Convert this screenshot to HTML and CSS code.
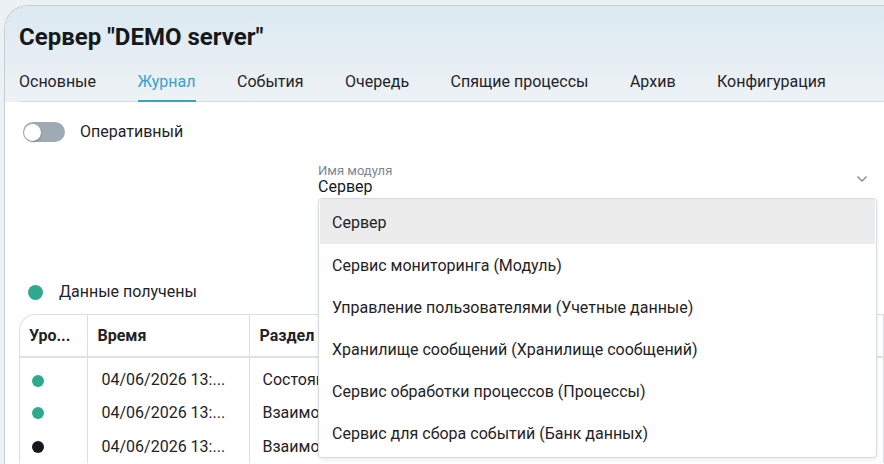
FILE: index.html
```html
<!DOCTYPE html>
<html>
<head>
    <title>Сервер "DEMO server"</title>
    <link rel="stylesheet" href="styles.css">
</head>
<body>
    <div class="card">
        <div class="card-head">
            <h1 class="title">Сервер "DEMO server"</h1>
            <div class="tabs">
                <div class="tab">Основные</div>
                <div class="tab active">Журнал</div>
                <div class="tab">События</div>
                <div class="tab">Очередь</div>
                <div class="tab">Спящие процессы</div>
                <div class="tab">Архив</div>
                <div class="tab">Конфигурация</div>
            </div>
        </div>
        <div class="card-body">
            <div class="switch-row">
                <div class="switch"><div class="knob"></div></div>
                <span>Оперативный</span>
            </div>

            <div class="filters">
                <div class="select">
                    <div class="select-text">
                        <div class="select-label">Имя модуля</div>
                        <div class="select-value">Сервер</div>
                    </div>
                    <svg class="chevron" width="12" height="8" viewBox="0 0 12 8">
                        <path d="M1.5 1.5 L6 6 L10.5 1.5" fill="none" stroke="#7b8a96" stroke-width="1.3"/>
                    </svg>
                    <div class="menu">
                        <div class="menu-item selected">Сервер</div>
                        <div class="menu-item">Сервис мониторинга (Модуль)</div>
                        <div class="menu-item">Управление пользователями (Учетные данные)</div>
                        <div class="menu-item">Хранилище сообщений (Хранилище сообщений)</div>
                        <div class="menu-item">Сервис обработки процессов (Процессы)</div>
                        <div class="menu-item">Сервис для сбора событий (Банк данных)</div>
                    </div>
                </div>
            </div>

            <div class="status">
                <span class="dot big ok"></span>
                <span>Данные получены</span>
            </div>

            <div class="grid">
                <table>
                    <thead>
                        <tr>
                            <th class="c-level">Уро...</th>
                            <th class="c-time">Время</th>
                            <th>Раздел</th>
                        </tr>
                    </thead>
                    <tbody>
                        <tr>
                            <td class="c-level"><span class="dot ok"></span></td>
                            <td class="c-time">04/06/2026 13:...</td>
                            <td>Состояние</td>
                        </tr>
                        <tr>
                            <td class="c-level"><span class="dot ok"></span></td>
                            <td class="c-time">04/06/2026 13:...</td>
                            <td>Взаимодействие</td>
                        </tr>
                        <tr>
                            <td class="c-level"><span class="dot dark"></span></td>
                            <td class="c-time">04/06/2026 13:...</td>
                            <td>Взаимодействие</td>
                        </tr>
                    </tbody>
                </table>
            </div>
        </div>
    </div>
</body>
</html>
```

FILE: styles.css
```css
body {
    margin: 0;
    padding: 5px 0 0 4px;
    background: #eef1f3;
    font-family: Roboto, "Noto Sans", sans-serif;
    font-size: 16px;
    color: #1f2326;
    height: 100vh;
    box-sizing: border-box;
    overflow: hidden;
}
.card {
    height: 100%;
    background: #fff;
    border: 1px solid #bfd0da;
    border-right: none;
    border-bottom: none;
    border-radius: 24px 0 0 0;
    overflow: hidden;
}
.card-head {
    padding: 17px 0 0 14px;
    background: linear-gradient(#dbe9f1, #eef2f5);
}
.title {
    margin: 0;
    font-size: 24px;
    font-weight: bold;
    line-height: 28px;
    color: #16191c;
}
.tabs {
    display: flex;
    gap: 41.5px;
    margin-top: 21px;
    border-bottom: 1px solid #d3dbe1;
}
.tab {
    padding-bottom: 8px;
    line-height: 20px;
    border-bottom: 2px solid transparent;
    margin-bottom: -1px;
}
.tab.active {
    color: #3aa1c9;
    border-bottom-color: #3aa1c9;
}
.card-body {
    padding: 20px 0 0 14px;
}
.switch-row {
    display: flex;
    align-items: center;
    gap: 15px;
    line-height: 20px;
    padding-left: 4px;
}
.switch {
    width: 42px;
    height: 20px;
    border-radius: 10px;
    background: #9eaab4;
    display: flex;
    align-items: center;
    padding: 0 1px;
    box-sizing: border-box;
}
.knob {
    width: 17px;
    height: 17px;
    border-radius: 50%;
    background: #fff;
    box-shadow: 0 1px 2px rgba(0,0,0,0.25);
}
.filters {
    padding-left: 299px;
    margin-top: 21px;
    height: 119px;
}
.select {
    position: relative;
    display: flex;
    align-items: center;
    width: 550px;
}
.select-text {
    flex: 1;
}
.select-label {
    font-size: 13px;
    line-height: 15px;
    color: #7a8792;
}
.select-value {
    line-height: 18px;
    color: #16191c;
}
.chevron {
    margin: 0 0 2px 0;
}
.menu {
    position: absolute;
    top: 35px;
    left: 0;
    width: 559px;
    box-sizing: border-box;
    background: #fff;
    border: 1px solid #d5dade;
    border-radius: 4px;
    box-shadow: 0 2px 4px rgba(0,0,0,0.08);
    padding: 0 1px 3px 1px;
    z-index: 10;
}
.menu-item {
    height: 42px;
    line-height: 43px;
    padding-left: 12px;
    white-space: nowrap;
}
.menu-item.selected {
    height: 45px;
    line-height: 48px;
    background: #ececec;
}
.status {
    display: flex;
    align-items: center;
    gap: 16px;
    padding-left: 9px;
    line-height: 20px;
}
.dot {
    display: inline-block;
    width: 12px;
    height: 12px;
    border-radius: 50%;
    vertical-align: middle;
}
.dot.big {
    width: 15px;
    height: 15px;
}
.dot.ok {
    background: #2fa88f;
}
.dot.dark {
    background: #15191e;
}
.grid {
    margin-top: 12px;
    border: 1px solid #dcdfe1;
    border-right: none;
    border-bottom: none;
    border-radius: 16px 0 0 0;
    overflow: hidden;
}
table {
    border-collapse: collapse;
    table-layout: fixed;
    width: 100%;
}
th, td {
    box-sizing: border-box;
    white-space: nowrap;
    overflow: hidden;
    border-right: 1px solid #dcdfe1;
}
th {
    text-align: left;
    font-weight: bold;
    height: 42px;
    padding: 0 10px;
    border-bottom: 2px solid #dfe1e3;
}
td {
    height: 34px;
    padding: 0 13px;
}
tbody tr:first-child td {
    height: 38px;
    padding-top: 6px;
}
th.c-level {
    width: 67px;
    padding-left: 9px;
}
td.c-level {
    padding-left: 12px;
}
th.c-time {
    width: 162px;
}
td.c-time {
    padding-left: 14px;
}
```
